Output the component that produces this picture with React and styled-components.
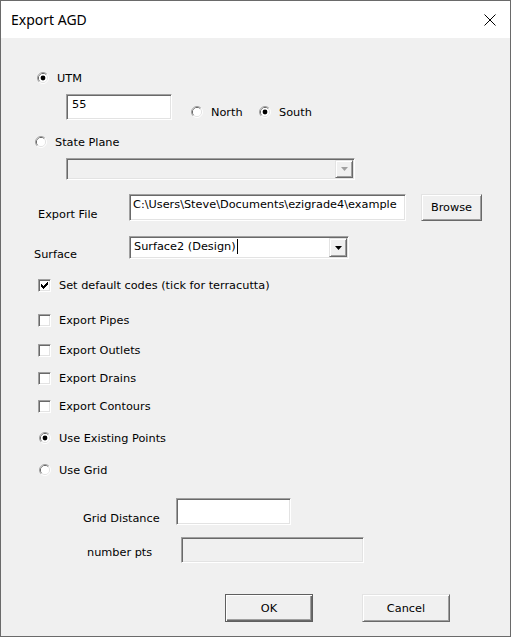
import React from "react";
import styled, { createGlobalStyle, css } from "styled-components";

const FONT = `"DejaVu Sans", Tahoma, Verdana, sans-serif`;

const GlobalStyle = createGlobalStyle`
  html, body { margin: 0; padding: 0; background: #f0f0f0; }
  body { font-family: ${FONT}; }
  * { box-sizing: border-box; }
`;

const sunken = css`
  border: 1px solid;
  border-color: #a0a0a0 #ffffff #ffffff #a0a0a0;
  box-shadow: inset 1px 1px 0 #696969, inset -1px -1px 0 #e3e3e3;
`;

const raised = css`
  border: 1px solid;
  border-color: #e3e3e3 #696969 #696969 #e3e3e3;
  box-shadow: inset 1px 1px 0 #ffffff, inset -1px -1px 0 #a0a0a0;
`;

const Window = styled.div`
  width: 511px;
  height: 637px;
  border: 1px solid #6a6a6a;
  display: flex;
  flex-direction: column;
  background: #f0f0f0;
  overflow: hidden;
`;

const TitleBar = styled.div`
  height: 37px;
  flex: none;
  background: #ffffff;
  display: flex;
  align-items: center;
  justify-content: space-between;
  padding: 0 14px 0 10px;
`;

const Title = styled.span`
  font-family: "Noto Sans", "Segoe UI", sans-serif;
  font-size: 14px;
  color: #000;
`;

const CloseIcon = styled.svg`
  width: 12px;
  height: 12px;
  display: block;
`;

const Body = styled.div`
  flex: 1;
  display: flex;
  flex-direction: column;
  align-items: flex-start;
  font-family: ${FONT};
  font-size: 11.3px;
  color: #000;
`;

const Row = styled.div`
  display: flex;
  align-items: ${(p) => p.$align || "center"};
  margin-top: ${(p) => p.$mt}px;
  padding-left: ${(p) => p.$pl}px;
`;

const Option = styled.div`
  display: flex;
  align-items: center;
  gap: 8px;
  height: 12px;
  line-height: 14px;
  white-space: nowrap;
  width: ${(p) => (p.$w ? `${p.$w}px` : "auto")};
  margin-top: ${(p) => p.$mt || 0}px;
  margin-left: ${(p) => p.$ml || 0}px;
`;

const OptionText = styled.span`
  padding-top: 1px;
`;

const CheckRow = styled.div`
  display: flex;
  align-items: center;
  gap: 8px;
  height: 13px;
  line-height: 14px;
  white-space: nowrap;
`;

const RadioSvg = styled.svg`
  width: 12px;
  height: 12px;
  flex: none;
  display: block;
`;

const CheckBoxBox = styled.div`
  ${sunken};
  width: 13px;
  height: 13px;
  flex: none;
  background: #ffffff;
  padding: 1px;
`;

/* label beside a field: pushed down by $mt without growing the row */
const FieldLabel = styled.div`
  width: ${(p) => p.$w}px;
  height: 14px;
  margin: ${(p) => p.$mt}px 0 -${(p) => p.$mt}px;
  line-height: 14px;
  white-space: nowrap;
  flex: none;
`;

const TextBox = styled.div`
  ${sunken};
  width: ${(p) => p.$w}px;
  height: ${(p) => p.$h}px;
  background: ${(p) => (p.$disabled ? "#f0f0f0" : "#ffffff")};
  padding: 3px ${(p) => p.$px || 3}px 0;
  line-height: 14px;
  white-space: nowrap;
  overflow: hidden;
  flex: none;
`;

const ComboBox = styled.div`
  ${sunken};
  width: ${(p) => p.$w}px;
  height: ${(p) => p.$h}px;
  background: ${(p) => (p.$disabled ? "#f0f0f0" : "#ffffff")};
  padding: 1px;
  display: flex;
  flex: none;
`;

const ComboText = styled.div`
  flex: 1;
  padding: 2px 0 0 3px;
  line-height: 14px;
  white-space: nowrap;
  overflow: hidden;
  display: flex;
  align-items: flex-start;
`;

const Caret = styled.span`
  display: inline-block;
  width: 1px;
  height: 15px;
  background: #000;
  margin-left: 1px;
  margin-top: -1px;
`;

const ComboButton = styled.div`
  ${raised};
  width: 18px;
  flex: none;
  background: #f0f0f0;
  display: flex;
  align-items: center;
  justify-content: center;
`;

const PushButton = styled.button`
  ${raised};
  width: ${(p) => p.$w}px;
  height: ${(p) => p.$h}px;
  margin-left: ${(p) => p.$ml || 0}px;
  background: #f0f0f0;
  font-family: ${FONT};
  font-size: 11.3px;
  color: #000;
  padding: 0;
  flex: none;
  ${(p) =>
    p.$default &&
    css`
      border: 1px solid #5f5f5f;
      box-shadow: inset 1px 1px 0 #ffffff, inset -1px -1px 0 #696969,
        inset -2px -2px 0 #a0a0a0;
    `}
`;

const Radio = ({ checked, children, w, mt, ml }) => (
  <Option $w={w} $mt={mt} $ml={ml}>
    <RadioSvg viewBox="0 0 12 12">
      <path d="M2.11 9.89 A5.5 5.5 0 0 1 9.89 2.11" fill="none" stroke="#a0a0a0" />
      <path d="M9.89 2.11 A5.5 5.5 0 0 1 2.11 9.89" fill="none" stroke="#ffffff" />
      <path d="M2.82 9.18 A4.5 4.5 0 0 1 9.18 2.82" fill="none" stroke="#696969" />
      <path d="M9.18 2.82 A4.5 4.5 0 0 1 2.82 9.18" fill="none" stroke="#e3e3e3" />
      <circle cx="6" cy="6" r="4" fill="#ffffff" />
      {checked && <circle cx="6" cy="6" r="2.4" fill="#000000" />}
    </RadioSvg>
    <OptionText>{children}</OptionText>
  </Option>
);

const CHECK_COLS = [2, 3, 4, 3, 2, 1, 0];

const Checkbox = ({ checked, children }) => (
  <CheckRow>
    <CheckBoxBox>
      {checked && (
        <svg width="9" height="9" viewBox="0 0 9 9" style={{ display: "block" }}>
          {CHECK_COLS.map((y, i) => (
            <rect key={i} x={1 + i} y={1 + y} width="1" height="3" fill="#000" />
          ))}
        </svg>
      )}
    </CheckBoxBox>
    <OptionText>{children}</OptionText>
  </CheckRow>
);

const Arrow = ({ color }) => (
  <svg width="7" height="4" viewBox="0 0 7 4" style={{ display: "block" }}>
    <polygon points="0,0 7,0 3.5,4" fill={color} />
  </svg>
);

export default function App() {
  return (
    <>
      <GlobalStyle />
      <Window>
        <TitleBar>
          <Title>Export AGD</Title>
          <CloseIcon viewBox="0 0 12 12">
            <path d="M0.5 0.5 L11.5 11.5 M11.5 0.5 L0.5 11.5" stroke="#000" strokeWidth="1" />
          </CloseIcon>
        </TitleBar>
        <Body>
          <Row $mt={34} $pl={36}>
            <Radio checked>UTM</Radio>
          </Row>
          <Row $mt={10} $pl={65} $align="flex-start">
            <TextBox $w={106} $h={26} $px={5}>55</TextBox>
            <Radio w={68} mt={12} ml={19}>North</Radio>
            <Radio checked mt={12}>South</Radio>
          </Row>
          <Row $mt={16} $pl={34}>
            <Radio>State Plane</Radio>
          </Row>
          <Row $mt={10} $pl={65}>
            <ComboBox $w={289} $h={22} $disabled>
              <ComboText />
              <ComboButton>
                <Arrow color="#a0a0a0" />
              </ComboButton>
            </ComboBox>
          </Row>
          <Row $mt={14} $pl={37} $align="flex-start">
            <FieldLabel $w={91} $mt={14}>Export File</FieldLabel>
            <TextBox $w={277} $h={27} $px={3}>
              {"C:\\Users\\Steve\\Documents\\ezigrade4\\example"}
            </TextBox>
            <PushButton $w={61} $h={27} $ml={15}>Browse</PushButton>
          </Row>
          <Row $mt={15} $pl={33} $align="flex-start">
            <FieldLabel $w={95} $mt={12}>Surface</FieldLabel>
            <ComboBox $w={220} $h={23}>
              <ComboText>
                Surface2 (Design)
                <Caret />
              </ComboText>
              <ComboButton>
                <Arrow color="#000000" />
              </ComboButton>
            </ComboBox>
          </Row>
          <Row $mt={20} $pl={37}>
            <Checkbox checked>Set default codes (tick for terracutta)</Checkbox>
          </Row>
          <Row $mt={22} $pl={37}>
            <Checkbox>Export Pipes</Checkbox>
          </Row>
          <Row $mt={17} $pl={37}>
            <Checkbox>Export Outlets</Checkbox>
          </Row>
          <Row $mt={15} $pl={37}>
            <Checkbox>Export Drains</Checkbox>
          </Row>
          <Row $mt={15} $pl={37}>
            <Checkbox>Export Contours</Checkbox>
          </Row>
          <Row $mt={19} $pl={38}>
            <Radio checked>Use Existing Points</Radio>
          </Row>
          <Row $mt={20} $pl={38}>
            <Radio>Use Grid</Radio>
          </Row>
          <Row $mt={22} $pl={82} $align="flex-start">
            <FieldLabel $w={93} $mt={14}>Grid Distance</FieldLabel>
            <TextBox $w={115} $h={27} />
          </Row>
          <Row $mt={12} $pl={86} $align="flex-start">
            <FieldLabel $w={94} $mt={9}>number pts</FieldLabel>
            <TextBox $w={183} $h={26} $disabled />
          </Row>
          <Row $mt={31} $pl={224}>
            <PushButton $w={88} $h={28} $default>OK</PushButton>
            <PushButton $w={88} $h={28} $ml={49}>Cancel</PushButton>
          </Row>
        </Body>
      </Window>
    </>
  );
}
